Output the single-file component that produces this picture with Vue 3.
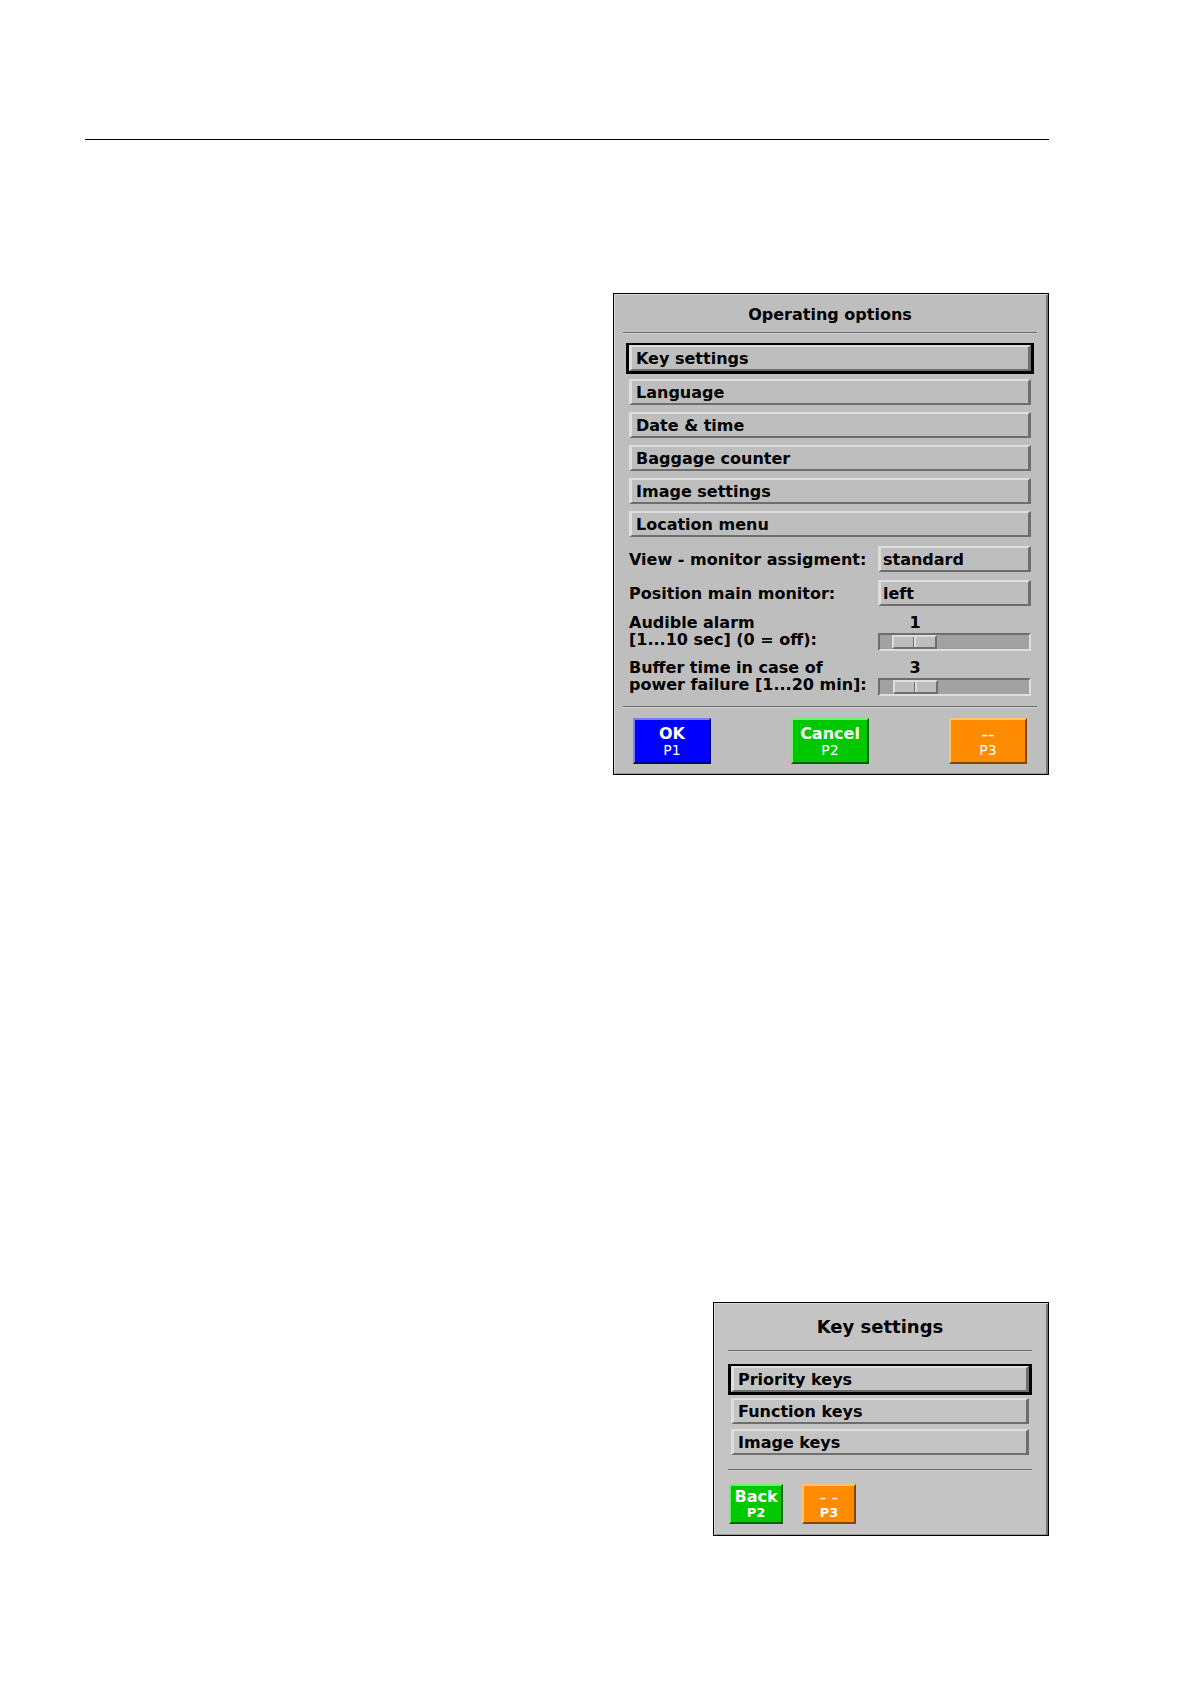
<script setup>
import { ref } from 'vue'

const options = ['Key settings', 'Language', 'Date & time', 'Baggage counter', 'Image settings', 'Location menu']
const keyOptions = ['Priority keys', 'Function keys', 'Image keys']
const view = ref('standard')
const position = ref('left')
const alarm = ref(1)
const buffer = ref(3)
</script>

<template>
  <main class="page">
    <hr class="page-rule" />

    <section class="panel operating" aria-labelledby="operating-title">
      <h2 id="operating-title" class="title">Operating options</h2>
      <hr class="groove" />
      <ul class="menu">
        <li v-for="(item, i) in options" :key="item" :class="{ selected: i === 0 }">
          <button type="button" class="entry">{{ item }}</button>
        </li>
      </ul>
      <div class="settings">
        <div class="row">
          <label for="view">View - monitor assigment:</label>
          <select id="view" v-model="view" class="entry">
            <option>standard</option>
          </select>
        </div>
        <div class="row">
          <label for="position">Position main monitor:</label>
          <select id="position" v-model="position" class="entry">
            <option>left</option>
            <option>right</option>
          </select>
        </div>
        <div class="row range">
          <label for="alarm">Audible alarm<br />[1...10 sec] (0 = off):</label>
          <div class="slider">
            <output for="alarm">{{ alarm }}</output>
            <input id="alarm" v-model="alarm" type="range" min="0" max="10" />
          </div>
        </div>
        <div class="row range">
          <label for="buffer">Buffer time in case of<br />power failure [1...20 min]:</label>
          <div class="slider">
            <output for="buffer">{{ buffer }}</output>
            <input id="buffer" v-model="buffer" type="range" min="1" max="20" />
          </div>
        </div>
      </div>
      <hr class="groove" />
      <div class="keys">
        <button type="button" class="key blue"><b>OK</b><span>P1</span></button>
        <button type="button" class="key green"><b>Cancel</b><span>P2</span></button>
        <button type="button" class="key orange"><b class="dashes">--</b><span>P3</span></button>
      </div>
    </section>

    <section class="panel key-settings" aria-labelledby="keys-title">
      <h2 id="keys-title" class="title">Key settings</h2>
      <hr class="groove" />
      <ul class="menu">
        <li v-for="(item, i) in keyOptions" :key="item" :class="{ selected: i === 0 }">
          <button type="button" class="entry">{{ item }}</button>
        </li>
      </ul>
      <hr class="groove" />
      <div class="keys">
        <button type="button" class="key green"><b>Back</b><span>P2</span></button>
        <button type="button" class="key orange"><b class="dashes">- -</b><span>P3</span></button>
      </div>
    </section>
  </main>
</template>

<style>
body {
  margin: 0;
  background: #fff;
}
</style>

<style scoped>
.page {
  display: flex;
  flex-direction: column;
  align-items: flex-end;
  padding: 139px 141px 148px 85px;
  color: #000;
  font: bold 16px/17px "DejaVu Sans", Verdana, sans-serif;
}

.page *,
.page {
  box-sizing: border-box;
}

.page-rule {
  width: 100%;
  height: 1px;
  margin: 0 0 153px;
  border: 0;
  background: #000;
}

.panel {
  max-width: 100%;
  border: 1px solid #000;
  background: #bebebe;
  box-shadow: inset 1px 1px #d8d8d8, inset -2px 0 #777, inset 0 -1px #999;
}

.operating {
  width: 436px;
  padding: 11px 11px 10px 9px;
}

.key-settings {
  width: 336px;
  margin-top: 527px;
  padding: 14px 16px 11px 14px;
  background: #c4c4c4;
}

.title {
  margin: 0;
  font-size: 16px;
  line-height: 20px;
  text-align: center;
}

.key-settings .title {
  font-size: 18px;
}

.groove {
  height: 2px;
  margin: 7px 0 0;
  border: 0;
  border-top: 1px solid #6a6a6a;
  border-bottom: 1px solid #d2d2d2;
}

.settings + .groove {
  margin-top: 10px;
}

.menu {
  display: flex;
  flex-direction: column;
  gap: 7px;
  margin: 11px 6px 0;
  padding: 0;
  list-style: none;
}

.menu li {
  display: flex;
}

.menu .selected {
  margin: -2px -3px;
  border: solid #000;
  border-width: 2px 3px 3px;
}

.entry {
  flex: 1;
  width: 100%;
  height: 26px;
  margin: 0;
  padding: 0 4px;
  border: solid;
  border-width: 2px 3px;
  border-color: #dedede #6e6e6e #6e6e6e #dedede;
  border-radius: 0;
  background: transparent;
  color: #000;
  font: inherit;
  text-align: left;
  appearance: none;
}

.settings {
  display: flex;
  flex-direction: column;
  gap: 8px;
  margin: 9px 6px 0;
}

.row {
  display: grid;
  grid-template-columns: 1fr 153px;
  align-items: center;
  white-space: nowrap;
}

.row .entry {
  padding: 0 2px;
}

.range {
  align-items: start;
}

.slider {
  display: flex;
  flex-direction: column;
}

.slider output {
  width: 74px;
  height: 19px;
  text-align: center;
}

.slider input {
  width: 100%;
  height: 18px;
  margin: 0;
  padding: 0 0 0 2px;
  border: 2px solid;
  border-color: #6e6e6e #dedede #dedede #6e6e6e;
  background: #a2a2a2;
  appearance: none;
}

.slider input::-webkit-slider-thumb {
  width: 45px;
  height: 14px;
  border: 2px solid;
  border-color: #dedede #6e6e6e #6e6e6e #dedede;
  background: linear-gradient(90deg, #bebebe 19px, #6e6e6e 19px 20px, #dedede 20px 22px, #bebebe 22px);
  appearance: none;
}

.keys {
  display: flex;
}

.operating .keys {
  justify-content: space-between;
  margin: 10px 10px 0;
}

.key {
  display: flex;
  flex-direction: column;
  align-items: center;
  justify-content: center;
  width: 78px;
  height: 46px;
  padding: 0;
  border: 2px solid;
  border-radius: 0;
  color: #fff;
  font: inherit;
}

.key span {
  font-size: 14px;
  font-weight: normal;
  line-height: 16px;
}

.key .dashes {
  font-size: 18px;
  font-weight: normal;
}

.blue {
  border-color: #7c7cff #000080 #000080 #7c7cff;
  background: #0000fe;
}

.green {
  border-color: #70f070 #006400 #006400 #70f070;
  background: #00c800;
}

.orange {
  border-color: #ffc070 #804800 #804800 #ffc070;
  background: #ff8c00;
}

.key-settings .groove {
  margin-top: 13px;
}

.key-settings .menu {
  gap: 5px;
  margin: 14px 3px;
}

.key-settings .keys {
  gap: 19px;
  margin: 13px 1px 0;
}

.key-settings .key {
  width: 54px;
  height: 40px;
}

.key-settings .key span {
  font-size: 13px;
  font-weight: bold;
}
</style>
